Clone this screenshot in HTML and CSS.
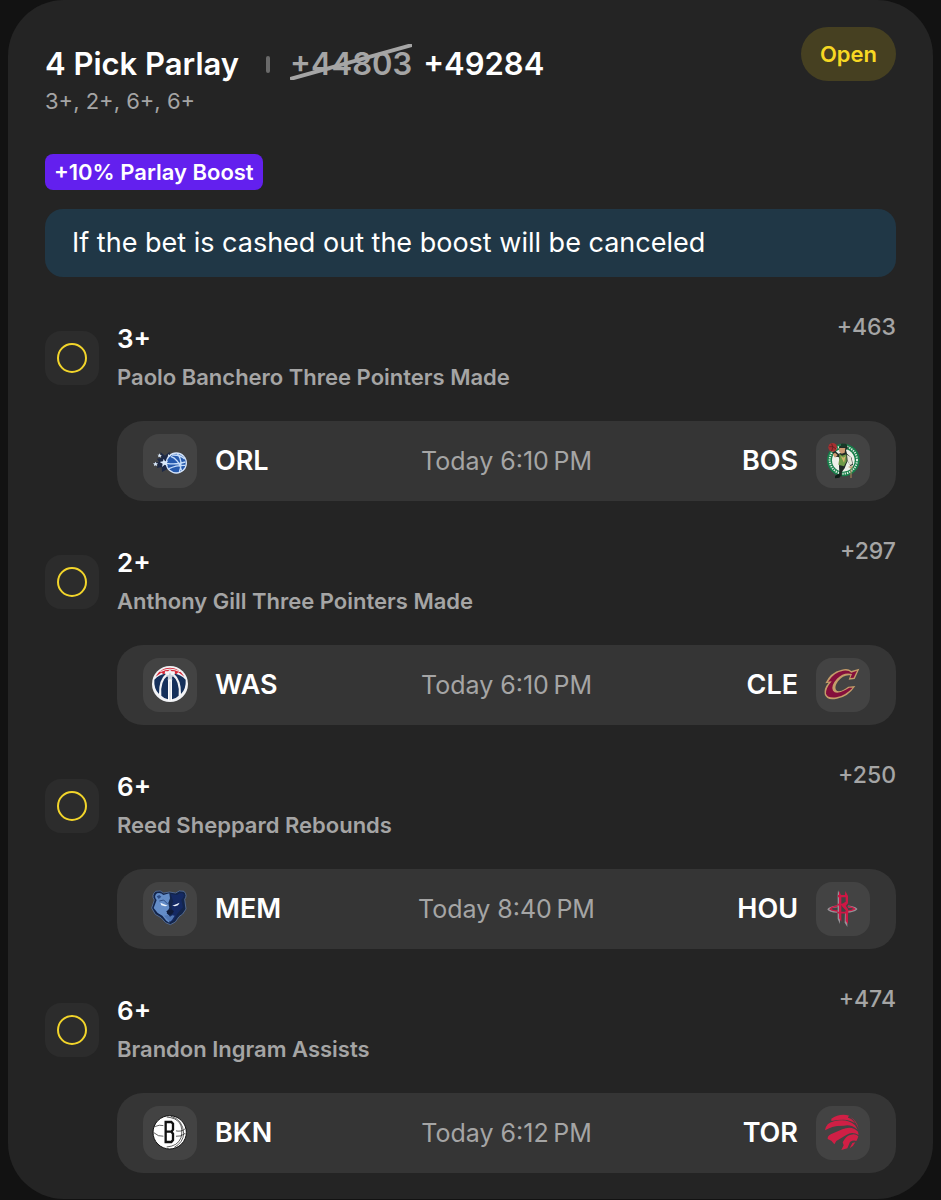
FILE: index.html
```html
<!DOCTYPE html>
<html lang="en">
<head>
<meta charset="utf-8">
<meta name="viewport" content="width=device-width, initial-scale=1">
<title>4 Pick Parlay</title>
<link rel="stylesheet" href="styles.css">
</head>
<body>
<main class="card">
  <header class="head">
    <div class="summary">
      <div class="title-row">
        <h1 class="title">4 Pick Parlay</h1>
        <span class="divider"></span>
        <span class="odds">
          <span class="old-odds">+44803<svg class="strike" viewBox="0 0 122 36" preserveAspectRatio="none" aria-hidden="true"><path d="M0 35 122 1" stroke="#a5a5a5" stroke-width="4"/></svg></span>
          <strong class="new-odds">+49284</strong>
        </span>
      </div>
      <p class="picks">3+, 2+, 6+, 6+</p>
    </div>
    <span class="status">Open</span>
  </header>

  <div class="boost">+10% Parlay Boost</div>
  <p class="notice">If the bet is cashed out the boost will be canceled</p>

  <ul class="legs">
    <li class="leg">
      <span class="state"><span class="ring"></span></span>
      <div class="leg-body">
        <div class="leg-head">
          <div class="pick"><h2 class="line">3+</h2><p class="market">Paolo Banchero Three Pointers Made</p></div>
          <span class="price">+463</span>
        </div>
        <div class="match">
          <div class="team">
            <svg class="logo" viewBox="12 10 162 162" aria-hidden="true">
              <path d="M42 98 60 94 54 84 68 82 64 64 78 75 92 63 92 78 84 116 69 124 68 109 54 112 57 101Z" fill="#1d2946"/>
              <circle cx="112" cy="97" r="32" fill="#d5e4fa"/>
              <circle cx="112" cy="97" r="28" fill="#2559ad"/>
              <g fill="none" stroke="#c4dcfa" stroke-width="4"><path d="M84 98Q110 103 139 94M95 77Q118 84 128 120M99 73Q126 72 137 85M90 114Q112 103 138 104M116 70Q133 91 121 124"/></g>
              <g fill="#dae9fb"><path d="m74 84 4 8 10-2-7 7 5 9-9-4-8 7 2-10-9-5 10-2Z"/><path d="m62 68 2 5 5 0-4 3 1 5-4-3-5 2 2-5-4-3 5 0Z"/><path d="m50 93 2 5 5 0-4 4 1 5-5-3-4 3 1-5-4-4 5 0Z"/><path d="m88 70 3 4 5-1-4 5-6 0Z"/></g>
            </svg>
            <span class="abbr">ORL</span>
          </div>
          <time class="when">Today 6:10&#8239;PM</time>
          <div class="team away">
            <span class="abbr">BOS</span>
            <svg class="logo" viewBox="12 10 162 162" aria-hidden="true">
              <circle cx="94" cy="88" r="49" fill="#167e49"/>
              <circle cx="94" cy="88" r="41" fill="none" stroke="#dce9df" stroke-width="6" stroke-dasharray="4 3"/>
              <circle cx="94" cy="89" r="34" fill="#eef0e9"/>
              <path d="m81 51 8-12 14 1 5 12-6 6 3 11 14 12 4 22-8 3-8-15-5 11-4 11-8 10-1 14-12 2 5-12-1-20 2-18-3-10-11-1-8-15 9-2 9 8 8-2Z" fill="#202a25"/>
              <path d="M82 52h18l-2 14-9 3-8-7ZM69 66l8 7-8 8-7-10Z" fill="#cc9b72"/>
              <path d="m82 69 8 6 13-4 1 21-8 15-17-5 3-19Z" fill="#6e9a47"/>
              <path d="m86 76 8 5 7-5-5 20Z" fill="#cfb36a"/>
              <path d="M105 72 117 80 121 100 113 104 107 90Z" fill="#e6e4d8"/>
              <path d="M85 49h20l-5-10H89Z" fill="#183a29"/>
              <circle cx="62" cy="50" r="13" fill="#a73031"/><path d="M52 48q12-3 20 7M59 39q7 11 0 22" fill="none" stroke="#481e20" stroke-width="2"/>
              <path d="M117 108v34M110 109h13" stroke="#b18a59" stroke-width="3"/>
              <path d="m78 130-9 6 0 7 14-2 1-9Z" fill="#111d18"/>
            </svg>
          </div>
        </div>
      </div>
    </li>

    <li class="leg">
      <span class="state"><span class="ring"></span></span>
      <div class="leg-body">
        <div class="leg-head">
          <div class="pick"><h2 class="line">2+</h2><p class="market">Anthony Gill Three Pointers Made</p></div>
          <span class="price">+297</span>
        </div>
        <div class="match">
          <div class="team">
            <svg class="logo" viewBox="10 10 162 162" aria-hidden="true">
              <circle cx="91" cy="88" r="54" fill="#f2f3f6"/>
              <path d="M48 66C67 30 114 30 134 66L116 53 107 61 105 50 96 50 91 45 85 50 76 50 75 61 65 54Z" fill="#d52b3b"/>
              <path d="M62 51q29-15 59 0" fill="none" stroke="#f3edf0" stroke-width="3"/>
              <path d="M44 75Q59 58 79 57 57 75 58 118 42 102 44 75ZM138 75Q123 58 103 57 125 75 124 118 140 102 138 75ZM65 123Q61 80 85 62V134Q74 132 65 123ZM117 123Q121 80 97 62V134Q108 132 117 123Z" fill="#15305b"/>
              <path d="m91 53 4 8 8 1-6 6 1 9-7-4-7 4 1-9-6-6 8-1Z" fill="#cbd2da"/>
              <path d="M87 78h8l2 60H85Z" fill="#fff"/><path d="M91 80v57" stroke="#a7b2c2" stroke-width="2"/>
            </svg>
            <span class="abbr">WAS</span>
          </div>
          <time class="when">Today 6:10&#8239;PM</time>
          <div class="team away">
            <span class="abbr">CLE</span>
            <svg class="logo" viewBox="12 10 162 162" aria-hidden="true">
              <path d="M142 42 128 73 110 75 115 62Q94 59 78 80 66 97 72 106 80 115 99 103L109 96 130 94Q108 127 75 132 44 139 38 119 35 101 50 84L40 86Q54 53 89 45 108 39 118 49Z" fill="#c49c69"/>
              <path d="M135 48 125 69 115 70 120 58Q96 51 75 72 55 94 63 108 72 121 100 106L112 99 122 99Q100 123 73 128 47 131 42 117 41 101 59 80L48 81Q66 52 94 48 111 46 118 54Z" fill="#850f3c"/>
            </svg>
          </div>
        </div>
      </div>
    </li>

    <li class="leg">
      <span class="state"><span class="ring"></span></span>
      <div class="leg-body">
        <div class="leg-head">
          <div class="pick"><h2 class="line">6+</h2><p class="market">Reed Sheppard Rebounds</p></div>
          <span class="price">+250</span>
        </div>
        <div class="match">
          <div class="team">
            <svg class="logo" viewBox="12 10 162 162" aria-hidden="true">
              <path d="M50 38Q65 33 74 43 91 37 110 43 120 33 135 38 146 50 137 62L141 91 131 106 120 114 109 130 94 138 80 132 66 117 49 107 38 88 46 64Q36 50 50 38Z" fill="#13254b" stroke="#6683b1" stroke-width="2"/>
              <path d="M54 44Q65 40 73 49L91 44 93 59 88 73 91 87 83 104 91 111V132L82 126 70 111 56 103 44 88 53 64Q43 53 54 44Z" fill="#648dc8"/>
              <path d="M95 46 114 49Q126 38 134 47 137 55 127 63L132 86 116 104 105 124 94 130 94 110 103 104 97 85 103 69Z" fill="#142963"/>
              <path d="m64 72 22 9-8 2-11-3ZM122 72 100 81l8 2 9-3Z" fill="#edf4fb"/>
              <path d="m53 53 8-4 6 5-8 7Z" fill="#2c4c86"/>
              <path d="m82 98 7-5h10l6 5-7 9-5 2-7-4Z" fill="#101b38"/>
              <path d="m75 111 12-2 6 5 7-4 7 1-8 13-6 5-9-7Z" fill="#5177b3"/>
              <path d="M61 67 74 64 86 76M121 69 109 65 99 76" fill="none" stroke="#182f60" stroke-width="2"/>
            </svg>
            <span class="abbr">MEM</span>
          </div>
          <time class="when">Today 8:40&#8239;PM</time>
          <div class="team away">
            <span class="abbr">HOU</span>
            <svg class="logo" viewBox="12 10 162 162" aria-hidden="true">
              <path d="M77 83Q51 86 49 92 52 98 76 100M108 83Q129 86 133 91 125 98 104 100" fill="none" stroke="#969197" stroke-width="5"/>
              <path d="M77 82Q60 84 55 91 62 97 78 97M107 83Q124 86 128 91 121 96 104 97" fill="none" stroke="#ce1745" stroke-width="4"/>
              <path d="M78 35 84 50V136L77 121V50ZM99 98 106 107V145L98 132Z" fill="#969197"/>
              <path d="M81 36 88 51V129L81 119ZM100 37 108 52V74L101 81 108 91V137L101 127V95L90 83V76L101 69V56H78V49H99Z" fill="#ce1745"/>
              <path d="M76 78H103M76 102H109" stroke="#ce1745" stroke-width="5"/>
            </svg>
          </div>
        </div>
      </div>
    </li>

    <li class="leg">
      <span class="state"><span class="ring"></span></span>
      <div class="leg-body">
        <div class="leg-head">
          <div class="pick"><h2 class="line">6+</h2><p class="market">Brandon Ingram Assists</p></div>
          <span class="price">+474</span>
        </div>
        <div class="match">
          <div class="team">
            <svg class="logo" viewBox="12 10 162 162" aria-hidden="true">
              <circle cx="92" cy="89" r="50" fill="#fff" stroke="#111" stroke-width="3"/>
              <path d="M46 72Q61 65 76 69M43 89Q57 103 76 101M96 41Q132 51 134 92 133 119 106 134M83 43Q139 48 126 105 117 130 83 133M108 84Q127 89 139 78M108 101Q126 103 139 92" fill="none" stroke="#111" stroke-width="2"/>
              <rect x="73" y="51" width="38" height="74" rx="6" fill="#fff"/>
              <path d="M80 58H97L102 63V81L97 87 102 93V112L97 118H80ZM80 87H97" fill="none" stroke="#111" stroke-width="7"/>
            </svg>
            <span class="abbr">BKN</span>
          </div>
          <time class="when">Today 6:12&#8239;PM</time>
          <div class="team away">
            <span class="abbr">TOR</span>
            <svg class="logo" viewBox="12 10 162 162" aria-hidden="true">
              <g fill="#d01f45">
                <path d="M58 48Q83 31 112 39 107 42 108 45 122 49 129 62 112 50 92 51 77 51 58 55Z"/>
                <path d="M39 83Q42 61 66 56 105 46 129 68L137 81Q117 64 96 69 73 69 61 73 50 77 39 83Z"/>
                <path d="M47 109Q46 99 58 94L91 80Q119 67 138 87L140 97Q121 86 104 96L73 115 67 125 58 114Z"/>
                <path d="M88 142 95 128 92 119Q102 98 117 96 130 92 139 101 137 109 133 115 124 111 114 118L106 137Z"/>
                <path d="M113 137 121 121 130 119Q124 132 113 137ZM116 43Q137 57 140 79 133 59 116 43Z"/>
              </g>
            </svg>
          </div>
        </div>
      </div>
    </li>
  </ul>
</main>
</body>
</html>
```
FILE: styles.css
```css
* {
  box-sizing: border-box;
}

body {
  margin: 0;
  background: #121212;
  color: #fff;
  font-family: Inter, "Liberation Sans", sans-serif;
}

h1, h2, p, ul {
  margin: 0;
  padding: 0;
}

.card {
  margin: 0 8px;
  padding: 27px 37px 26px;
  border-radius: 56px;
  background: #242424;
}

.head {
  display: flex;
  justify-content: space-between;
  align-items: flex-start;
}

.summary {
  padding-top: 17px;
}

.title-row {
  display: flex;
  align-items: center;
  height: 40px;
}

.title {
  font-size: 31px;
  line-height: 40px;
  font-weight: 600;
}

.divider {
  width: 4px;
  height: 17px;
  margin: 0 20px 0 27px;
  border-radius: 2px;
  background: #6a6a6a;
}

.odds {
  display: flex;
  gap: 11px;
  font-size: 31px;
  line-height: 40px;
  font-weight: 600;
}

.old-odds {
  position: relative;
  color: #a5a5a5;
}

.strike {
  position: absolute;
  top: 0;
  left: 0;
  width: 100%;
  height: 36px;
}

.new-odds {
  font-weight: 600;
}

.picks {
  color: #a5a5a5;
  font-size: 22px;
  line-height: 34px;
  font-weight: 400;
}

.status {
  padding: 0 19px;
  border-radius: 27px;
  background: #464021;
  color: #f7d823;
  font-size: 22px;
  line-height: 54px;
  font-weight: 600;
}

.boost {
  width: fit-content;
  margin-top: 36px;
  padding: 0 9px;
  border-radius: 8px;
  background: #6320ee;
  font-size: 22px;
  line-height: 36px;
  font-weight: 600;
}

.notice {
  margin-top: 19px;
  padding: 0 27px;
  border-radius: 18px;
  background: #203746;
  font-size: 27px;
  line-height: 68px;
  font-weight: 400;
}

.legs {
  display: grid;
  gap: 45px;
  margin-top: 45px;
  list-style: none;
}

.leg {
  display: grid;
  grid-template-columns: 54px 1fr;
  gap: 18px;
}

.state {
  display: grid;
  place-items: center;
  width: 54px;
  height: 54px;
  margin-top: 9px;
  border-radius: 16px;
  background: #2c2c2c;
}

.ring {
  width: 30px;
  height: 30px;
  border: 2px solid #f2d52b;
  border-radius: 50%;
}

.leg-head {
  display: flex;
  justify-content: space-between;
  align-items: flex-start;
  height: 99px;
}

.line {
  font-size: 26px;
  line-height: 34px;
  font-weight: 600;
}

.market {
  margin-top: 4px;
  color: #a5a5a5;
  font-size: 22px;
  line-height: 34px;
  font-weight: 600;
}

.price {
  color: #a5a5a5;
  font-size: 23px;
  line-height: 10px;
  font-weight: 500;
}

.match {
  display: grid;
  grid-template-columns: 1fr auto 1fr;
  align-items: center;
  height: 80px;
  padding: 0 26px;
  border-radius: 26px;
  background: #353535;
}

.team {
  display: flex;
  align-items: center;
  gap: 18px;
}

.away {
  justify-content: flex-end;
}

.logo {
  width: 54px;
  height: 54px;
  border-radius: 16px;
  background: #434343;
}

.abbr {
  font-size: 27px;
  line-height: 34px;
  font-weight: 600;
}

.when {
  color: #a5a5a5;
  font-size: 25px;
  line-height: 34px;
  font-weight: 400;
}
```
